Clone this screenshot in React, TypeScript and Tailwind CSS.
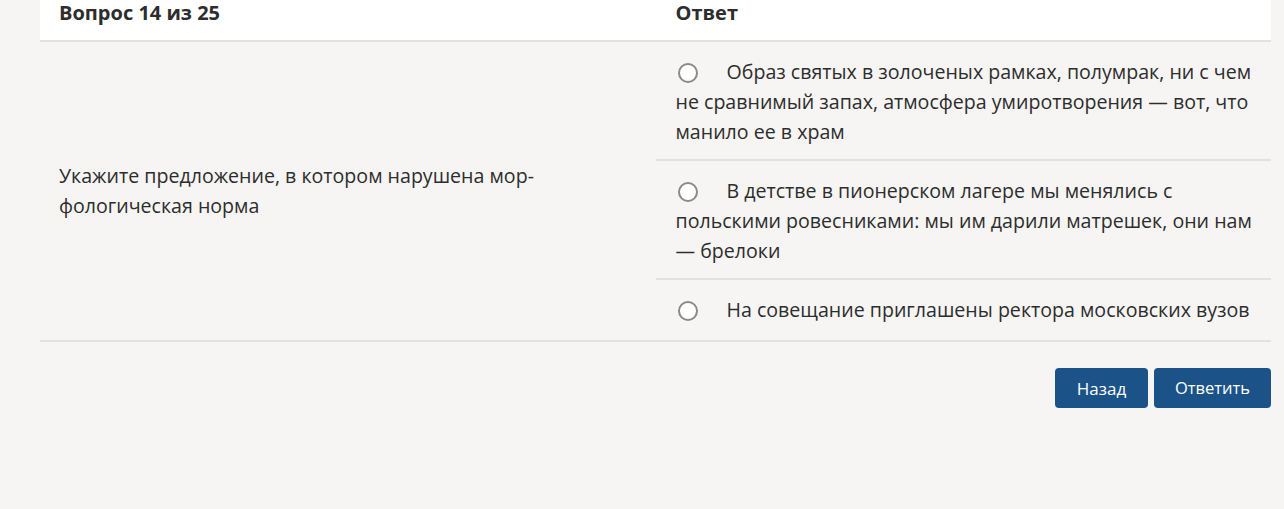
import React from "react";

const answers = [
  "Образ святых в золоченых рамках, полумрак, ни с чем не сравнимый запах, атмосфера умиротворения — вот, что манило ее в храм",
  "В детстве в пионерском лагере мы менялись с польскими ровесниками: мы им дарили матрешек, они нам — брелоки",
  "На совещание приглашены ректора московских вузов",
];

export default function App() {
  return (
    <div
      className="min-h-[509px] w-full bg-[#f6f5f3] text-[#2d2d2d]"
      style={{ fontFamily: '"Open Sans", "Noto Sans", sans-serif' }}
    >
      <div className="ml-10 mr-[13px]">
        <div className="grid grid-cols-2 bg-white border-b-2 border-[#e2e1de]">
          <div className="h-[40px] pl-[19px] text-[20px] leading-[26px] font-bold">Вопрос 14 из 25</div>
          <div className="h-[40px] pl-5 text-[20px] leading-[26px] font-bold">Ответ</div>
        </div>
        <div className="grid grid-cols-2 border-b-2 border-[#e2e1de]">
          <div className="flex items-center pl-[19px] text-[19.6px] leading-[30px]">
            <p>
              Укажите предложение, в котором нарушена мор-
              <br />
              фологическая норма
            </p>
          </div>
          <div className="flex flex-col">
            {answers.map((a, i) => (
              <div
                key={i}
                className={
                  i < answers.length - 1
                    ? "border-b-2 border-[#e2e1de] pl-5 pr-[6px] pt-[15px] pb-[12px] text-[19.6px] leading-[30px]"
                    : "pl-5 pr-[6px] pt-[15px] pb-[15px] text-[19.6px] leading-[30px]"
                }
              >
                <span className="ml-[2px] mr-[29px] inline-block h-[20px] w-[20px] translate-y-[4px] rounded-full border-2 border-[#8a8a8a] bg-white align-baseline"></span>
                {a}
              </div>
            ))}
          </div>
        </div>
        <div className="mt-[26px] flex justify-end gap-[6px]">
          <button className="h-[40px] w-[93px] rounded-[4px] bg-[#1b5288] pt-[1px] text-[17px] text-white">Назад</button>
          <button className="h-[40px] w-[117px] rounded-[4px] bg-[#1b5288] pt-[1px] text-[16.5px] text-white">Ответить</button>
        </div>
      </div>
    </div>
  );
}
